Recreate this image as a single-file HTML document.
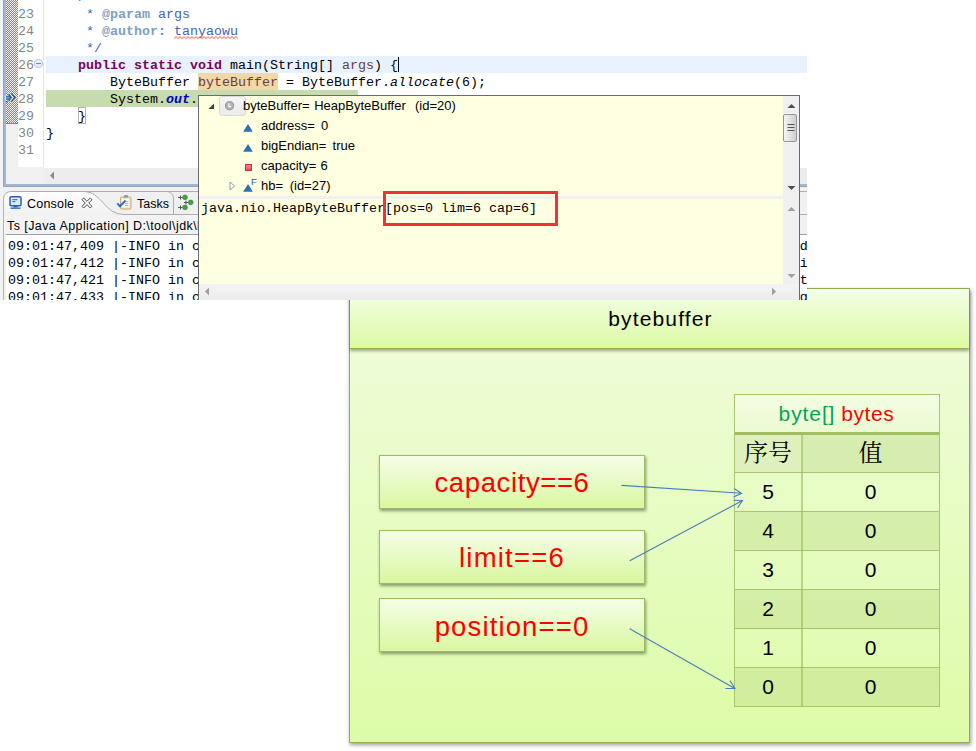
<!DOCTYPE html>
<html><head><meta charset="utf-8">
<style>
html,body{margin:0;padding:0;}
body{width:976px;height:751px;background:#fff;position:relative;overflow:hidden;font-family:"Liberation Sans","Noto Sans CJK SC",sans-serif;}
.abs{position:absolute;}
/* ---------- diagram ---------- */
#dg{position:absolute;left:349px;top:288px;width:619px;height:453px;border:1px solid #8fb04c;box-shadow:1px 2px 4px rgba(0,0,0,.4);background:linear-gradient(#eefcd6 0,#eefcd6 62px,#ddfca8 100%);}
#dgh{position:absolute;left:0;top:0;width:619px;height:60px;border-bottom:1px solid #8fb04c;background:linear-gradient(#f4fee8,#dcfaa4);box-shadow:0 2px 3px rgba(0,0,0,.35);text-align:center;font-size:21px;letter-spacing:1.15px;line-height:60px;color:#000;padding-left:2px;box-sizing:border-box;}
.bx{position:absolute;left:30px;width:264px;height:52px;border:1px solid #9dbb61;background:linear-gradient(#f5fee9,#d9f7a0);box-shadow:1px 2px 3px rgba(0,0,0,.4);text-align:center;color:#f00;font-size:27.5px;line-height:52px;}
#tb{position:absolute;left:0;top:0;width:0;height:0;}
#tb .cj{font-family:"Liberation Serif","Noto Serif CJK SC",serif;font-size:24px;line-height:37px;}
#tb .dg{font-size:21px;}
#tb div{position:absolute;box-sizing:border-box;text-align:center;color:#000;font-size:22px;}
/* ---------- IDE ---------- */
#ide{position:absolute;left:0;top:0;width:807px;height:300px;overflow:hidden;background:#fff;}
.mono{font-family:"Liberation Mono",monospace;font-size:13.33px;line-height:18.89px;white-space:pre;transform:scaleY(.9);transform-origin:0 0;}
.ln{position:absolute;left:18px;color:#868686;margin-top:2px;}
.cl{position:absolute;left:46px;color:#000;margin-top:2px;}
.kw{color:#7f0055;font-weight:bold;}
.cm{color:#3f5fbf;}
.tg{color:#7f9fbf;font-weight:bold;}
#pop{position:absolute;left:198px;top:95px;width:600px;height:210px;border:1px solid #6b6b6b;background:#ffffe1;overflow:hidden;}
.sq{text-decoration:underline wavy #e03030 1px;text-underline-offset:2px;}
.ui{font-family:"Liberation Sans",sans-serif;font-size:13px;white-space:pre;color:#000;}
</style></head><body>

<!-- ================= DIAGRAM ================= -->
<div id="dg">
  <div id="dgh">bytebuffer</div>
  <div class="abs" style="left:-1px;top:0;width:0;height:0;">
  <div class="bx" style="top:166px;letter-spacing:.61px;line-height:54px;">capacity==6</div>
  <div class="bx" style="top:241px;letter-spacing:1.22px;line-height:54px;">limit==6</div>
  <div class="bx" style="top:309px;letter-spacing:1.13px;line-height:56px;">position==0</div>
  <div id="tb">
    <div style="left:385px;top:105px;width:205px;height:38px;background:linear-gradient(#f3fde3,#ebfbd2);font-size:21px;line-height:39px;"><span style="color:#00a651;letter-spacing:.9px">byte[]</span> <span style="color:#f00;letter-spacing:.6px">bytes</span></div>
    <div class="cj" style="left:385px;top:146px;width:68px;height:37px;background:#def0bc;">序号</div>
    <div class="cj" style="left:453px;top:146px;width:137px;height:37px;background:#d7ecb1;">值</div>
    <div class="dg" style="left:385px;top:183px;width:68px;height:39px;background:transparent;line-height:40px;">5</div>
    <div class="dg" style="left:453px;top:183px;width:137px;height:39px;background:transparent;line-height:40px;">0</div>
    <div class="dg" style="left:385px;top:222px;width:68px;height:39px;background:rgba(176,205,120,.30);line-height:40px;">4</div>
    <div class="dg" style="left:453px;top:222px;width:137px;height:39px;background:rgba(176,205,120,.30);line-height:40px;">0</div>
    <div class="dg" style="left:385px;top:261px;width:68px;height:39px;background:transparent;line-height:40px;">3</div>
    <div class="dg" style="left:453px;top:261px;width:137px;height:39px;background:transparent;line-height:40px;">0</div>
    <div class="dg" style="left:385px;top:300px;width:68px;height:39px;background:rgba(176,205,120,.30);line-height:40px;">2</div>
    <div class="dg" style="left:453px;top:300px;width:137px;height:39px;background:rgba(176,205,120,.30);line-height:40px;">0</div>
    <div class="dg" style="left:385px;top:339px;width:68px;height:39px;background:transparent;line-height:40px;">1</div>
    <div class="dg" style="left:453px;top:339px;width:137px;height:39px;background:transparent;line-height:40px;">0</div>
    <div class="dg" style="left:385px;top:378px;width:68px;height:39px;background:rgba(176,205,120,.30);line-height:40px;">0</div>
    <div class="dg" style="left:453px;top:378px;width:137px;height:39px;background:rgba(176,205,120,.30);line-height:40px;">0</div>
    <div style="left:385px;top:105px;width:206px;height:1px;background:#a9c66f;"></div>
    <div style="left:385px;top:143px;width:206px;height:3px;background:#9fbf62;"></div>
    <div style="left:385px;top:183px;width:206px;height:1px;background:#a9c66f;"></div>
    <div style="left:385px;top:222px;width:206px;height:1px;background:#a9c66f;"></div>
    <div style="left:385px;top:261px;width:206px;height:1px;background:#a9c66f;"></div>
    <div style="left:385px;top:300px;width:206px;height:1px;background:#a9c66f;"></div>
    <div style="left:385px;top:339px;width:206px;height:1px;background:#a9c66f;"></div>
    <div style="left:385px;top:378px;width:206px;height:1px;background:#a9c66f;"></div>
    <div style="left:385px;top:417px;width:206px;height:1px;background:#a9c66f;"></div>
    <div style="left:385px;top:105px;width:1px;height:313px;background:#a9c66f;"></div>
    <div style="left:590px;top:105px;width:1px;height:313px;background:#a9c66f;"></div>
    <div style="left:452px;top:146px;width:2px;height:271px;background:rgba(150,190,90,.6);"></div>
  </div>
  <svg class="abs" style="left:0;top:0;" width="621" height="454" viewBox="349 289 621 454" fill="none" stroke="#4a7ebb" stroke-width="1.1">
    <path d="M621.5 485.4L741.6 493.3M734 488.5L741.6 493.3L733.5 497"/>
    <path d="M629.7 560.8L742.5 500.5M733.5 500.3L742.5 500.5L737.5 508"/>
    <path d="M629.7 628.7L734.9 688.5M730 680.5L734.9 688.5L725.5 688.5"/>
  </svg>
  </div>
</div>

<!-- ================= IDE ================= -->
<div id="ide">
  <!-- left frame strips -->
  <div class="abs" style="left:0;top:0;width:3px;height:300px;background:#f3f3f3;"></div>
  <div class="abs" style="left:3px;top:0;width:1px;height:186px;background:#a3a3a3;"></div>
  <div class="abs" style="left:4px;top:0;width:2px;height:186px;background:#9db7d8;"></div>
  <!-- annotation ruler -->
  <div class="abs" style="left:6px;top:0;width:12px;height:167px;background:#f0f0f0;"></div>
  <div class="abs" style="left:6px;top:0;width:12px;height:123px;background:repeating-conic-gradient(#3399ff 0% 25%,#ffffff 0% 50%) 0 0/2px 2px;"></div>
  <div class="abs" style="left:6px;top:123px;width:12px;height:1px;background:#3399ff;"></div>
  <!-- line number separator -->
  <div class="abs" style="left:43px;top:0;width:1px;height:167px;background:#e6e6e6;"></div>
  <!-- line highlights -->
  <div class="abs" style="left:46px;top:56px;width:761px;height:17px;background:#e8f2fe;"></div>
  <div class="abs" style="left:46px;top:90px;width:312px;height:17px;background:#c6dbae;"></div>
  <div class="abs" style="left:198px;top:73px;width:80px;height:17px;background:#f0d8a8;"></div>
  <div class="abs" style="left:78px;top:107px;width:6px;height:15px;border:1px solid #b4b4b4;"></div>
  <!-- line numbers -->
  <div class="ln mono" style="top:5px;">23</div>
  <div class="ln mono" style="top:22px;">24</div>
  <div class="ln mono" style="top:39px;">25</div>
  <div class="ln mono" style="top:56px;">26</div>
  <div class="ln mono" style="top:73px;">27</div>
  <div class="ln mono" style="top:90px;">28</div>
  <div class="ln mono" style="top:107px;">29</div>
  <div class="ln mono" style="top:124px;">30</div>
  <div class="ln mono" style="top:141px;">31</div>
  <!-- code -->
  <div class="cl mono cm" style="top:-12px;">    /**</div>
  <div class="cl mono cm" style="top:5px;">     * <span class="tg">@param</span> args</div>
  <div class="cl mono cm" style="top:22px;">     * <span class="tg">@author</span>: tanyaowu</div>
  <div class="cl mono cm" style="top:39px;">     */</div>
  <div class="cl mono" style="top:56px;">    <span class="kw">public</span> <span class="kw">static</span> <span class="kw">void</span> main(String[] <span style="color:#6a3e3e">args</span>) {</div>
  <div class="cl mono" style="top:73px;">        ByteBuffer <span style="color:#6a3e3e;">byteBuffer</span> = ByteBuffer.<i>allocate</i>(6);</div>
  <div class="cl mono" style="top:90px;">        System.<b><i style="color:#0000c0">out</i></b>.</div>
  <div class="cl mono" style="top:107px;">    }</div>
  <div class="cl mono" style="top:124px;">}</div>
  <svg class="abs" style="left:172px;top:34px;" width="70" height="7" viewBox="172 34 70 7"><path d="M174 38.5L176 36.6L178 38.5L180 36.6L182 38.5L184 36.6L186 38.5L188 36.6L190 38.5L192 36.6L194 38.5L196 36.6L198 38.5L200 36.6L202 38.5L204 36.6L206 38.5L208 36.6L210 38.5L212 36.6L214 38.5L216 36.6L218 38.5L220 36.6L222 38.5L224 36.6L226 38.5L228 36.6L230 38.5L232 36.6L234 38.5L236 36.6L238 38.5" fill="none" stroke="#f4602a" stroke-width="1"/></svg>
  <!-- caret -->
  <div class="abs" style="left:398px;top:57px;width:1px;height:15px;background:#000;"></div>
  <!-- fold marker -->
  <svg class="abs" style="left:33px;top:58px;" width="11" height="11" viewBox="0 0 11 11"><circle cx="5.5" cy="5.500" r="4.200" fill="#e6eff9" stroke="#b9c6d6" stroke-width="1"/><path d="M3 5.500H8" stroke="#7c8ca4" stroke-width="1.100"/></svg>
  <!-- debug instruction pointer -->
  <svg class="abs" style="left:5px;top:91px;" width="13" height="14" viewBox="5 91 13 14"><path d="M6 95.800H8.600V93L12 97.500L8.600 102V99.600H6Z" fill="#2f6db3" stroke="#ffffff" stroke-width="1.200" paint-order="stroke"/><path d="M6 96H8.600V93L12 97.500L8.600 102V99.400H6Z" fill="#2a62a6"/><path d="M6 96.700H9.500V98.700H6Z" fill="#6f9fd2"/><path d="M10.300 93.200H12.200L16 97.500L12.200 101.800H10.300L14 97.500Z" fill="#2b4d72" stroke="#e6eef8" stroke-width=".9" paint-order="stroke"/><path d="M6 101.500L7.700 101L7.300 103.500Z" fill="#1c4f8c"/></svg>
  <!-- editor h-scrollbar -->
  <div class="abs" style="left:6px;top:167px;width:801px;height:17px;background:#f0f0f0;"></div>
  <div class="abs" style="left:44px;top:167px;width:763px;height:1px;background:#fff;"></div>
  <div class="abs" style="left:44px;top:168px;width:763px;height:16px;background:#ededed;"></div>
  <svg class="abs" style="left:49px;top:171px;" width="6" height="9" viewBox="0 0 6 9"><path d="M5 0.500L1 4.500L5 8.500Z" fill="#8a8a8a"/></svg>
  <!-- editor bottom border -->
  <div class="abs" style="left:4px;top:184px;width:803px;height:2px;background:#9db7d8;"></div>
  <div class="abs" style="left:3px;top:186px;width:804px;height:1px;background:#a3a3a3;"></div>
  <div class="abs" style="left:0;top:187px;width:807px;height:4px;background:#f1f1f1;"></div>
  <!-- console view -->
  <div class="abs" style="left:3px;top:191px;width:830px;height:120px;background:#f0f0f0;"></div>
  <svg class="abs" style="left:0;top:186px;" width="210" height="52" viewBox="0 186 210 52">
    <defs><linearGradient id="tg1" x1="0" y1="0" x2="0" y2="1"><stop offset="0" stop-color="#ffffff"/><stop offset="1" stop-color="#f1f1f1"/></linearGradient></defs>
    <path d="M4 300V199C4 194 7 191.500 12 191.500H84C102 191.500 104 214.500 124 214.500H210V300Z" fill="#f3f3f3"/>
    <path d="M4 215V199C4 194 7 191.500 12 191.500H84C102 191.500 104 214.500 124 214.500V215Z" fill="url(#tg1)"/>
    <path d="M3.500 300V199C3.500 194 7 191.500 12 191.500H84C102 191.500 104 214.500 124 214.500H210" fill="none" stroke="#adadad" stroke-width="1"/>
    <path d="M80 191.500H166C170.500 191.500 173.500 194 173.500 199V214.500" fill="none" stroke="#adadad" stroke-width="1"/>
    <path d="M166 191.500H210" fill="none" stroke="#adadad" stroke-width="1"/>
  </svg>
  <div class="abs" style="left:6px;top:234px;width:830px;height:1px;background:#a0a0a0;"></div>
  <div class="abs" style="left:6px;top:235px;width:830px;height:70px;background:#fff;"></div>
  <div class="abs" style="left:3px;top:199px;width:1px;height:110px;background:#b4b4b4;"></div>
  <!-- console icon -->
  <svg class="abs" style="left:8px;top:195px;" width="15" height="15" viewBox="0 0 15 15"><rect x="2" y="1.700" width="11" height="9" rx="1.300" fill="#dfe9fa" stroke="#2f5fa8" stroke-width="1.500"/><path d="M4.300 4.700H9.500M4.300 6.700H7.500" stroke="#3465a8" stroke-width="1"/><path d="M5.500 11H9.500V12.500H5.500Z" fill="#2f5fa8"/><path d="M2.500 13.200H12.500" stroke="#3a78c8" stroke-width="1.500"/></svg>
  <div class="abs ui" style="left:27px;top:196px;line-height:16px;font-size:12.5px;letter-spacing:.2px;">Console</div>
  <svg class="abs" style="left:81px;top:197px;" width="12" height="12" viewBox="0 0 12 12"><path d="M1 2.700L2.700 1L6 4.300L9.300 1L11 2.700L7.700 6L11 9.300L9.300 11L6 7.700L2.700 11L1 9.300L4.300 6Z" fill="#fff" stroke="#4a4a4a" stroke-width="1"/></svg>
  <!-- tasks icon -->
  <svg class="abs" style="left:116px;top:194px;" width="17" height="16" viewBox="0 0 17 16"><rect x="4.500" y="3" width="10.500" height="12" rx="1" fill="#f7e7c6" stroke="#d2a468" stroke-width="1"/><rect x="6.500" y="5" width="6.500" height="8" fill="#fff"/><path d="M7.500 3.500L8.500 1H11.500L12.500 3.500Z" fill="#8d96a3"/><path d="M9 7.500H12.500M9 9.500H12.500M9 11.500H12.500" stroke="#8fa2c0" stroke-width=".8"/><path d="M1.300 9.300L4 12.300L9.500 6.500" fill="none" stroke="#1e6ed2" stroke-width="1.900"/></svg>
  <div class="abs ui" style="left:137px;top:196px;line-height:16px;font-size:12.5px;">Tasks</div>
  <!-- hierarchy icon -->
  <svg class="abs" style="left:177px;top:193px;" width="18" height="18" viewBox="177 193 18 18"><path d="M178 197.500H182.500M180.500 195.500V199.500M184 202.500H188M186 200.500V204.500M178 207.500H182.500M180.500 205.500V209.500" stroke="#555" stroke-width="1"/><circle cx="185" cy="197.300" r="2.400" fill="#43a043" stroke="#2f7d2f" stroke-width=".6"/><circle cx="190.700" cy="202.400" r="2.400" fill="#43a043" stroke="#2f7d2f" stroke-width=".6"/><circle cx="185" cy="207.400" r="2.400" fill="#43a043" stroke="#2f7d2f" stroke-width=".6"/></svg>
  <div class="abs ui" style="left:7px;top:218px;line-height:17px;font-size:12.5px;letter-spacing:.42px;">Ts [Java Application] D:\tool\jdk\bin\javaw.exe</div>
  <!-- console text -->
  <div class="abs mono" style="left:8px;top:239px;color:#000;">09:01:47,409 |-INFO in ch.qos.logback.classic.LoggerContext[default] - Could NOT find resource [logd
09:01:47,412 |-INFO in ch.qos.logback.classic.LoggerContext[default] - Could NOT find resource [logi
09:01:47,421 |-INFO in ch.qos.logback.classic.LoggerContext[default] - Found resource [logback.xml]t
09:01:47,433 |-INFO in ch.qos.logback.core.joran.spi.ConfigurationWatchList@1b0375b3 - URL [file:/Dg</div>

  <!-- ============ hover popup ============ -->
  <div id="pop">
    <div class="abs" style="left:0;top:100px;width:600px;height:3px;background:#f0f0f0;"></div>
    <!-- scrollbars -->
    <div class="abs" style="left:584px;top:0;width:16px;height:100px;background:#f0f0f0;"></div>
    <div class="abs" style="left:584px;top:103px;width:16px;height:102px;background:#f0f0f0;"></div>
    <div class="abs" style="left:0;top:188px;width:600px;height:17px;background:linear-gradient(#f4f4f4 0,#ececec 16px);"></div>
    <div class="abs" style="left:584px;top:18px;width:14px;height:28px;border:1px solid #979797;border-radius:2px;background:linear-gradient(90deg,#f4f4f4,#e2e2e2 50%,#cfcfcf);box-sizing:border-box;"></div>
    <svg class="abs" style="left:588px;top:27px;" width="8" height="9" viewBox="0 0 8 9"><path d="M0.500 1.500H7.500M0.500 4.500H7.500M0.500 7.500H7.500" stroke="#555" stroke-width="1"/></svg>
    <svg class="abs" style="left:588px;top:7px;" width="9" height="6" viewBox="0 0 9 6"><path d="M0.500 5L4.500 1L8.500 5Z" fill="#505050"/></svg>
    <svg class="abs" style="left:588px;top:89px;" width="9" height="6" viewBox="0 0 9 6"><path d="M0.500 1L4.500 5L8.500 1Z" fill="#505050"/></svg>
    <svg class="abs" style="left:588px;top:110px;" width="9" height="6" viewBox="0 0 9 6"><path d="M0.500 5L4.500 1L8.500 5Z" fill="#a0a0a0"/></svg>
    <svg class="abs" style="left:588px;top:177px;" width="9" height="6" viewBox="0 0 9 6"><path d="M0.500 1L4.500 5L8.500 1Z" fill="#a0a0a0"/></svg>
    <svg class="abs" style="left:5px;top:191px;" width="6" height="9" viewBox="0 0 6 9"><path d="M5 0.500L1 4.500L5 8.500Z" fill="#a0a0a0"/></svg>
    <svg class="abs" style="left:572px;top:191px;" width="6" height="9" viewBox="0 0 6 9"><path d="M1 0.500L5 4.500L1 8.500Z" fill="#a0a0a0"/></svg>
    <!-- tree -->
    <svg class="abs" style="left:9px;top:7px;" width="7" height="7" viewBox="0 0 7 7"><path d="M6 0.500V6H0.500Z" fill="#404040"/></svg>
    <div class="abs" style="left:20px;top:0;width:27px;height:20px;border:1px solid #dadada;border-radius:3px;background:linear-gradient(#f6f6f6,#ebebeb);box-sizing:border-box;"></div>
    <svg class="abs" style="left:25px;top:4px;" width="11" height="11" viewBox="0 0 11 11"><circle cx="5.600" cy="5.700" r="4.100" fill="#b4b4b4" stroke="#8e8e8e" stroke-width=".9"/><path d="M4.900 3.300V6.600H7.200" stroke="#fff" stroke-width="1.100" fill="none"/></svg>
    <div class="abs ui" style="left:44px;top:1px;line-height:18px;word-spacing:1px;">byteBuffer= HeapByteBuffer  (id=20)</div>
    <svg class="abs" style="left:44px;top:28px;" width="10" height="8" viewBox="0 0 10 8"><path d="M5 0L9.800 7.800H0.200Z" fill="#2b70b8"/></svg>
    <div class="abs ui" style="left:62px;top:21px;line-height:18px;word-spacing:2.5px;">address= 0</div>
    <svg class="abs" style="left:44px;top:48px;" width="10" height="8" viewBox="0 0 10 8"><path d="M5 0L9.800 7.800H0.200Z" fill="#2b70b8"/></svg>
    <div class="abs ui" style="left:62px;top:41px;line-height:18px;word-spacing:2.5px;">bigEndian= true</div>
    <div class="abs" style="left:46px;top:68px;width:5px;height:5px;border:1px solid #cf2c44;background:linear-gradient(#f58a96,#ea4a5e);"></div>
    <div class="abs ui" style="left:62px;top:61px;line-height:18px;word-spacing:.6px;">capacity= 6</div>
    <svg class="abs" style="left:30px;top:85px;" width="7" height="10" viewBox="0 0 7 10"><path d="M1 1L5.500 5L1 9Z" fill="#fff" stroke="#9a9a9a" stroke-width="1"/></svg>
    <svg class="abs" style="left:44px;top:88px;" width="10" height="8" viewBox="0 0 10 8"><path d="M5 0L9.800 7.800H0.200Z" fill="#2b70b8"/></svg>
    <div class="abs ui" style="left:52px;top:81px;font-size:9.500px;line-height:9px;color:#2060b0;">F</div>
    <div class="abs ui" style="left:62px;top:81px;line-height:18px;word-spacing:3px;">hb= (id=27)</div>
    <!-- detail -->
    <div class="abs mono" style="left:2px;top:105px;">java.nio.HeapByteBuffer[pos=0 lim=6 cap=6]</div>
    <div class="abs" style="left:184px;top:95px;width:169px;height:29px;border:3px solid #ee3236;"></div>
  </div>
  <!-- right sliver lines -->
  <div class="abs" style="left:800px;top:191px;width:7px;height:1px;background:#adadad;"></div>
  <div class="abs" style="left:800px;top:214px;width:7px;height:1px;background:#adadad;"></div>
</div>

</body></html>
